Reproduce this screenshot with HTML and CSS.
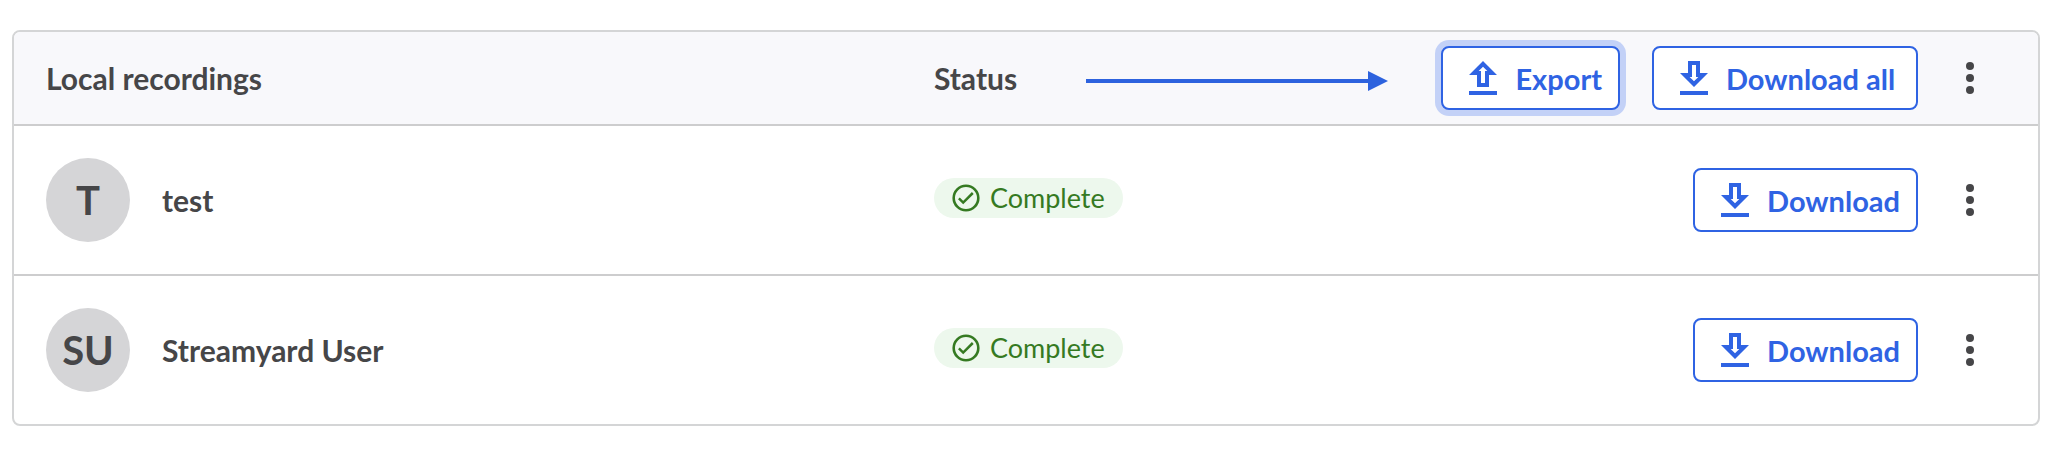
FILE: index.html
```html
<!DOCTYPE html>
<html lang="en">
<head>
<meta charset="utf-8">
<meta name="viewport" content="width=device-width, initial-scale=1">
<title>Local recordings</title>
<link rel="stylesheet" href="styles.css">
</head>
<body>
<svg class="symbols" aria-hidden="true">
  <symbol id="icon-download" viewBox="0 0 24 24"><path d="M19 9h-4V3H9v6H5l7 7 7-7zm-8 2V5h2v6h1.17L12 13.17 9.83 11H11zm-6 7h14v2H5z"/></symbol>
  <symbol id="icon-export" viewBox="0 0 24 24"><path d="M9 16h6v-6h4l-7-7-7 7h4v6zm3-10.17L14.17 8H13v6h-2V8H9.83L12 5.83zM5 18h14v2H5z"/></symbol>
  <symbol id="icon-more" viewBox="0 0 24 24"><circle cx="12" cy="6" r="2"/><circle cx="12" cy="12" r="2"/><circle cx="12" cy="18" r="2"/></symbol>
  <symbol id="icon-check" viewBox="0 0 28 28"><g fill="none" stroke="currentColor"><circle cx="14" cy="14" r="12.3" stroke-width="2.6"/><path d="M6.9 14.3l4.3 4.3 9.6-9.6" stroke-width="2.5"/></g></symbol>
</svg>
<main class="card">
  <table class="recordings">
    <colgroup><col class="col-name"><col class="col-status"><col class="col-actions"></colgroup>
    <thead>
      <tr class="head-row">
        <th class="cell-name" scope="col">Local recordings</th>
        <th class="cell-head-status" scope="col">
          <div class="status-head">
            <span>Status</span>
            <svg class="arrow" viewBox="0 0 302 26" aria-hidden="true"><path d="M0 14h282V6l20 10-20 10v-8H0z"/></svg>
          </div>
        </th>
        <td class="cell-actions">
          <div class="actions">
            <div class="button-group">
              <button class="button button-focused" type="button"><svg class="icon"><use href="#icon-export"/></svg>Export</button>
              <button class="button button-wide" type="button"><svg class="icon"><use href="#icon-download"/></svg>Download all</button>
            </div>
            <button class="more" type="button" aria-label="More options for all recordings"><svg class="icon"><use href="#icon-more"/></svg></button>
          </div>
        </td>
      </tr>
    </thead>
    <tbody>
      <tr class="row">
        <td class="cell-name"><div class="person"><span class="avatar">T</span><span>test</span></div></td>
        <td class="cell-status"><span class="badge"><svg class="check"><use href="#icon-check"/></svg>Complete</span></td>
        <td class="cell-actions">
          <div class="actions">
            <button class="button" type="button"><svg class="icon"><use href="#icon-download"/></svg>Download</button>
            <button class="more" type="button" aria-label="More options for test"><svg class="icon"><use href="#icon-more"/></svg></button>
          </div>
        </td>
      </tr>
      <tr class="row">
        <td class="cell-name"><div class="person"><span class="avatar">SU</span><span>Streamyard User</span></div></td>
        <td class="cell-status"><span class="badge"><svg class="check"><use href="#icon-check"/></svg>Complete</span></td>
        <td class="cell-actions">
          <div class="actions">
            <button class="button" type="button"><svg class="icon"><use href="#icon-download"/></svg>Download</button>
            <button class="more" type="button" aria-label="More options for Streamyard User"><svg class="icon"><use href="#icon-more"/></svg></button>
          </div>
        </td>
      </tr>
    </tbody>
  </table>
</main>
</body>
</html>
```
FILE: styles.css
```css
* { box-sizing: border-box; }

body {
  margin: 0;
  padding: 30px 28px 32px 12px;
  background: #fff;
  color: #464648;
  font-family: Lato, "Open Sans", sans-serif;
  font-size: 30px;
  font-weight: 700;
  line-height: 36px;
}

.symbols {
  position: absolute;
  width: 0;
  height: 0;
}

.card {
  border: 2px solid #d4d5d6;
  border-radius: 8px;
  overflow: hidden;
}

.recordings {
  width: 100%;
  border-collapse: separate;
  border-spacing: 0;
  table-layout: fixed;
}

.col-name { width: 45.45%; }
.col-status { width: 24%; }

th, td {
  padding: 0;
  text-align: left;
  vertical-align: middle;
}

.head-row > * {
  height: 94px;
  background: #f8f8fb;
}

.row > * { height: 150px; }

.head-row > *,
.row:not(:last-child) > * { border-bottom: 2px solid #cdcdce; }

.row:last-child > * { height: 148px; }

.recordings .cell-name { padding-left: 32px; }
.recordings .cell-actions { padding-right: 44px; }
.recordings .cell-status { padding-bottom: 4px; }

.status-head {
  display: flex;
  align-items: center;
  justify-content: space-between;
  padding-right: 32px;
}

.arrow {
  width: 302px;
  height: 26px;
  fill: #2d62de;
}

.actions {
  display: flex;
  align-items: center;
  justify-content: flex-end;
  gap: 28px;
}

.button-group {
  display: flex;
  gap: 32px;
}

.button {
  display: flex;
  align-items: center;
  gap: 8px;
  height: 64px;
  padding: 2px 16px 0;
  border: 2px solid #2f63e3;
  border-radius: 8px;
  background: #fff;
  color: #2f63e3;
  font: inherit;
  font-size: 29px;
  white-space: nowrap;
  cursor: pointer;
}

.button-wide { min-width: 266px; }

.button-focused { box-shadow: 0 0 0 6px #c3d1f7; }

.icon {
  flex: none;
  width: 48px;
  height: 48px;
  fill: currentColor;
}

.more {
  display: flex;
  padding: 0;
  border: 0;
  background: none;
  color: #464648;
  cursor: pointer;
}

.person {
  display: flex;
  align-items: center;
  gap: 32px;
}

.avatar {
  display: flex;
  align-items: center;
  justify-content: center;
  width: 84px;
  height: 84px;
  border-radius: 50%;
  background: #d5d5d7;
  font-size: 40px;
}

.badge {
  display: flex;
  align-items: center;
  gap: 10px;
  width: max-content;
  height: 40px;
  padding: 0 18px;
  border-radius: 20px;
  background: #edf8ed;
  color: #357a22;
  font-size: 27px;
  font-weight: 400;
}

.check {
  width: 28px;
  height: 28px;
}
```
